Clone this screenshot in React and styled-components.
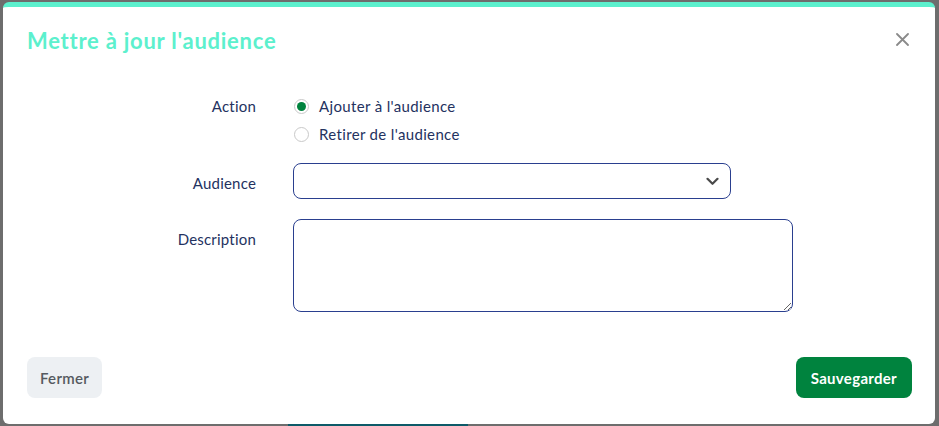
import React, { useState } from "react";
import styled, { createGlobalStyle } from "styled-components";

const Global = createGlobalStyle`
  html, body { margin: 0; padding: 0; }
  body {
    width: 939px;
    height: 426px;
    overflow: hidden;
    background:
      linear-gradient(#0d5a68, #0d5a68) 288px 424px / 180px 2px no-repeat,
      #6d6d6d;
    font-family: Lato, "Noto Sans", sans-serif;
  }
  * { box-sizing: border-box; }
`;

const Overlay = styled.div`
  padding: 2px 4px 2px 3px;
  height: 426px;
`;

const Modal = styled.div`
  height: 422px;
  background: #fff;
  border-top: 5px solid #5cf0cd;
  border-radius: 6px;
  display: flex;
  flex-direction: column;
`;

const Header = styled.div`
  display: flex;
  align-items: flex-start;
  justify-content: space-between;
  padding: 20px 25px 0 24px;
  height: 68px;
`;

const Title = styled.h2`
  margin: 0;
  font-family: Lato, "Noto Sans", sans-serif;
  font-weight: 700;
  font-size: 22px;
  line-height: 28px;
  color: #5cf0cd;
  letter-spacing: 0.75px;
`;

const CloseButton = styled.button`
  border: 0;
  background: none;
  padding: 0;
  margin-top: 6px;
  width: 14px;
  height: 14px;
  cursor: pointer;
  display: flex;
`;

const Form = styled.div`
  display: grid;
  grid-template-columns: 253px 1fr;
  column-gap: 37px;
  padding-top: 17px;
`;

const Label = styled.div`
  text-align: right;
  font-size: 15px;
  letter-spacing: 0.2px;
  color: #24325f;
  line-height: 28px;
  padding-top: ${(p) => p.$pt || 0}px;
  margin-bottom: ${(p) => p.$mb || 0}px;
`;

const Control = styled.div`
  margin-bottom: ${(p) => p.$mb || 0}px;
`;

const RadioGroup = styled.div`
  display: flex;
  flex-direction: column;
`;

const RadioOption = styled.label`
  display: flex;
  align-items: center;
  height: 28px;
  gap: 10px;
  font-size: 15px;
  letter-spacing: 0.35px;
  color: #24325f;
  cursor: pointer;
`;

const RadioCircle = styled.span`
  width: 15px;
  height: 15px;
  border-radius: 50%;
  border: 1px solid #c9c9c9;
  margin-left: 1px;
  display: flex;
  align-items: center;
  justify-content: center;
  &::after {
    content: "";
    width: 9px;
    height: 9px;
    border-radius: 50%;
    background: ${(p) => (p.$checked ? "#00833e" : "transparent")};
  }
`;

const SelectBox = styled.div`
  width: 438px;
  height: 36px;
  border: 1px solid #2a3f8f;
  border-radius: 8px;
  display: flex;
  align-items: center;
  justify-content: flex-end;
  padding-right: 11px;
`;

const TextArea = styled.textarea`
  display: block;
  width: 500px;
  height: 93px;
  border: 1px solid #2a3f8f;
  border-radius: 8px;
  font-family: Lato, sans-serif;
  font-size: 15px;
  resize: both;
  outline: none;
`;

const Footer = styled.div`
  margin-top: auto;
  display: flex;
  justify-content: space-between;
  padding: 0 23px 26px 24px;
`;

const Button = styled.button`
  height: 41px;
  border: 0;
  border-radius: 8px;
  padding: 0 ${(p) => (p.$primary ? 15 : 13)}px;
  font-family: Lato, "Noto Sans", sans-serif;
  font-size: 15px;
  letter-spacing: 0.3px;
  font-weight: ${(p) => (p.$primary ? 700 : 600)};
  background: ${(p) => (p.$primary ? "#00833e" : "#edf0f3")};
  color: ${(p) => (p.$primary ? "#ffffff" : "#555a60")};
  cursor: pointer;
`;

export default function App() {
  const [action, setAction] = useState("add");
  return (
    <>
      <Global />
      <Overlay>
        <Modal>
          <Header>
            <Title>Mettre à jour l'audience</Title>
            <CloseButton aria-label="Fermer">
              <svg width="13" height="13" viewBox="0 0 13 13">
                <path d="M1 1 L12 12 M12 1 L1 12" stroke="#8a8a8a" strokeWidth="1.8" strokeLinecap="round" />
              </svg>
            </CloseButton>
          </Header>
          <Form>
            <Label $mb={15}>Action</Label>
            <Control $mb={15}>
              <RadioGroup>
                <RadioOption onClick={() => setAction("add")}>
                  <RadioCircle $checked={action === "add"} />
                  Ajouter à l'audience
                </RadioOption>
                <RadioOption onClick={() => setAction("remove")}>
                  <RadioCircle $checked={action === "remove"} />
                  Retirer de l'audience
                </RadioOption>
              </RadioGroup>
            </Control>
            <Label $pt={6} $mb={20}>Audience</Label>
            <Control $mb={20}>
              <SelectBox>
                <svg width="13" height="9" viewBox="0 0 13 9">
                  <path d="M1.5 1.8 L6.5 6.8 L11.5 1.8" fill="none" stroke="#4a4a4a" strokeWidth="2.2" strokeLinecap="round" strokeLinejoin="round" />
                </svg>
              </SelectBox>
            </Control>
            <Label $pt={6}>Description</Label>
            <Control>
              <TextArea />
            </Control>
          </Form>
          <Footer>
            <Button>Fermer</Button>
            <Button $primary>Sauvegarder</Button>
          </Footer>
        </Modal>
      </Overlay>
    </>
  );
}
